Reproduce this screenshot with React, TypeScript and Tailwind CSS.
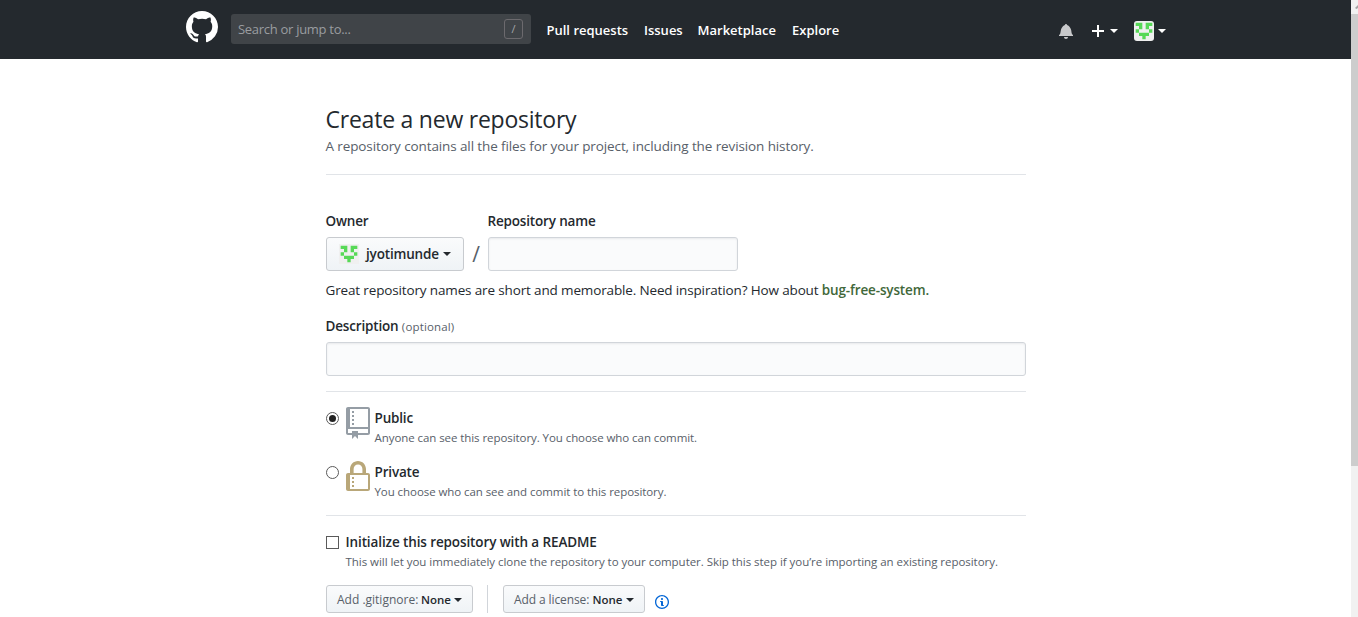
import React from "react";

type IconProps = { d: string; box: string; className: string };
const Icon = ({ d, box, className }: IconProps) => (
  <svg viewBox={box} className={"shrink-0 fill-current " + className} aria-hidden="true">
    <path fillRule="evenodd" d={d} />
  </svg>
);

const MARK =
  "M8 0C3.58 0 0 3.58 0 8c0 3.54 2.29 6.53 5.47 7.59.4.07.55-.17.55-.38 0-.19-.01-.82-.01-1.49-2.01.37-2.53-.49-2.69-.94-.09-.23-.48-.94-.82-1.13-.28-.15-.68-.52-.01-.53.63-.01 1.08.58 1.23.82.72 1.21 1.87.87 2.33.66.07-.52.28-.87.51-1.07-1.78-.2-3.64-.89-3.64-3.95 0-.87.31-1.59.82-2.15-.08-.2-.36-1.02.08-2.12 0 0 .67-.21 2.2.82.64-.18 1.32-.27 2-.27.68 0 1.36.09 2 .27 1.53-1.04 2.2-.82 2.2-.82.44 1.1.16 1.92.08 2.12.51.56.82 1.27.82 2.15 0 3.07-1.87 3.75-3.65 3.95.29.25.54.73.54 1.48 0 1.07-.01 1.93-.01 2.2 0 .21.15.46.55.38A8.013 8.013 0 0 0 16 8c0-4.42-3.58-8-8-8z";
const REPO =
  "M4 9H3V8h1v1zm0-3H3v1h1V6zm0-2H3v1h1V4zm0-2H3v1h1V2zm8-1v12c0 .55-.45 1-1 1H6v2l-1.5-1.5L3 16v-2H1c-.55 0-1-.45-1-1V1c0-.55.45-1 1-1h10c.55 0 1 .45 1 1zm-1 10H1v2h2v-1h3v1h5v-2zm0-10H2v9h9V1z";
const LOCK =
  "M4 13H3v-1h1v1zm8-6v7c0 .55-.45 1-1 1H1c-.55 0-1-.45-1-1V7c0-.55.45-1 1-1h1V4c0-2.2 1.8-4 4-4s4 1.8 4 4v2h1c.55 0 1 .45 1 1zM3.8 6h4.41V4c0-1.22-.98-2.2-2.2-2.2-1.22 0-2.2.98-2.2 2.2v2H3.8zM11 7H2v7h9V7zM4 8H3v1h1V8zm0 2H3v1h1v-1z";
const BELL =
  "M14 12v1H0v-1l.73-.58c.77-.77.81-2.55 1.19-4.42C2.69 3.23 6 2 6 2c0-.55.45-1 1-1s1 .45 1 1c0 0 3.39 1.23 4.16 5 .38 1.88.42 3.66 1.19 4.42l.66.58H14zm-7 4c1.11 0 2-.89 2-2H5c0 1.11.89 2 2 2z";
const PLUS = "M12 9H7v5H5V9H0V7h5V2h2v5h5z";
const INFO =
  "M6.3 5.69a.942.942 0 0 1-.28-.7c0-.28.09-.52.28-.7.19-.18.42-.28.7-.28.28 0 .52.09.7.28.18.19.28.42.28.7 0 .28-.09.52-.28.7a1 1 0 0 1-.7.3c-.28 0-.52-.11-.7-.3zM8 7.99c-.02-.25-.11-.48-.31-.69-.2-.19-.42-.3-.69-.31H6c-.27.02-.48.13-.69.31-.2.2-.3.44-.31.69h1v3c.02.27.11.5.31.69.2.2.42.31.69.31h1c.27 0 .48-.11.69-.31.2-.19.3-.42.31-.69H8V7.98v.01zM7 2.3c-3.14 0-5.7 2.54-5.7 5.68 0 3.14 2.56 5.7 5.7 5.7s5.7-2.55 5.7-5.7c0-3.15-2.56-5.69-5.7-5.69v.01zM7 .98c3.86 0 7 3.14 7 7s-3.14 7-7 7-7-3.12-7-7 3.14-7 7-7z";

const Identicon = ({ className }: { className: string }) => (
  <svg viewBox="0 0 12 12" className={"shrink-0 " + className} aria-hidden="true">
    <rect width="12" height="12" fill="#f0f0f0" />
    <path fill="#57d957" d="M1 1h4v4H3V3H1zM7 1h4v2H9v2H7zM1 5h2v2H1zM9 5h2v2H9zM3 7h6v2H7v2H5V9H3z" />
  </svg>
);

const Caret = ({ className }: { className: string }) => (
  <span className={"h-0 w-0 shrink-0 border-x-4 border-t-4 border-x-transparent " + className} />
);

const field =
  "block h-[34px] rounded-[3px] border border-[#d1d5da] bg-[#fafbfc] shadow-[inset_0_1px_2px_rgba(27,31,35,0.075)] outline-none";
const button =
  "flex items-center rounded-[3px] border border-[#c8cbcf] bg-linear-to-b from-[#fafbfc] to-[#eff3f6]";
const label = "font-semibold tracking-[-0.17px] -ml-[0.5px]";
const note = "-ml-[0.5px] h-5 text-[11.5px] leading-5 text-[#586069]";

export default function App() {
  return (
    <div className="flex h-[617px] w-[1358px] overflow-hidden bg-white font-['Open_Sans','Noto_Sans',sans-serif] text-[13.5px] text-[#24292e]">
      <div className="w-[1351px]">
        <header className="flex h-[59px] items-center bg-[#24292e] pl-[186px] text-white">
          <Icon d={MARK} box="0 0 16 16" className="mb-[5px] h-8 w-8" />
          <div className="mb-px ml-[13px] flex h-[30px] w-[300px] items-center justify-between rounded-[3px] bg-[#404448] pr-2 pl-[7px]">
            <span className="pt-px text-[13px] tracking-[-0.29px] text-[#9a9da0]">Search or jump to...</span>
            <span className="flex h-5 w-[19px] items-center justify-center rounded-[3px] border border-[#6c6a6e] text-[11px] text-[#a3a6a8]">/</span>
          </div>
          <nav className="ml-[15.5px] flex gap-4 pt-[2px] text-[13px] font-semibold whitespace-nowrap">
            <a className="w-[81.5px]">Pull requests</a>
            <a className="w-[37.5px]">Issues</a>
            <a className="w-[78.5px]">Marketplace</a>
            <a className="w-[48px]">Explore</a>
          </nav>
          <div className="ml-[219px] flex items-center pt-[3px]">
            <Icon d={BELL} box="0 0 14 16" className="h-4 w-[14px] text-[#c8c9cb]" />
            <Icon d={PLUS} box="0 0 12 16" className="ml-[19px] h-4 w-3" />
            <Caret className="ml-[6px] border-t-white" />
            <Identicon className="ml-4 h-5 w-5 rounded-[3px]" />
            <Caret className="ml-1 border-t-white" />
          </div>
        </header>

        <main className="ml-[326px] w-[700px] whitespace-nowrap">
          <div className="h-[116px] border-b border-[#e1e4e8] pt-[42px]">
            <h1 className="-ml-[0.5px] h-[35px] text-[23px] leading-9 font-normal tracking-[-0.23px]">Create a new repository</h1>
            <p className="-ml-[0.5px] h-5 leading-5 tracking-[-0.11px] text-[#586069]">
              A repository contains all the files for your project, including the revision history.
            </p>
          </div>

          <div className="flex pt-[36px]">
            <div className="w-[138px]">
              <div className={label + " h-[26px] leading-5"}>Owner</div>
              <div className={button + " h-[34px] pl-[12px]"}>
                <Identicon className="h-5 w-5" />
                <span className="ml-[7px] w-[74px] font-semibold tracking-[-0.17px]">jyotimunde</span>
                <Caret className="ml-[3px] border-t-[#24292e]" />
              </div>
            </div>
            <div className="flex w-6 items-end justify-center pb-px text-[21px] text-[#586069]">/</div>
            <div className="w-[250px]">
              <div className={label + " h-[26px] leading-5"}>Repository name</div>
              <input className={field + " w-full"} />
            </div>
          </div>

          <p className="mt-[9px] -ml-[0.5px] h-5 leading-5 tracking-[-0.145px]">
            Great repository names are short and memorable. Need inspiration? How about{" "}
            <b className="font-semibold text-[#41683a]">bug-free-system.</b>
          </p>

          <div className={label + " mt-4 h-[26px] leading-5"}>
            Description <span className="text-[11.5px] font-normal tracking-[0.15px] text-[#586069]">(optional)</span>
          </div>
          <input className={field + " w-full"} />

          <div className="mt-[15px] border-y border-[#e1e4e8] pt-[15px]">
            <div className="flex h-[54px]">
              <span className="mt-[5px] flex h-[13px] w-[13px] items-center justify-center rounded-full border border-[#5a5a5a]">
                <span className="h-[7px] w-[7px] rounded-full bg-[#222]" />
              </span>
              <Icon d={REPO} box="0 0 12 16" className="ml-[7px] h-8 w-6 text-[#959da5]" />
              <div className="ml-[5px] pt-px">
                <div className={label + " h-5 leading-5"}>Public</div>
                <p className={note + " tracking-[-0.07px]"}>
                  Anyone can see this repository. You choose who can commit.
                </p>
              </div>
            </div>
            <div className="flex h-[54px]">
              <span className="mt-[5px] h-[13px] w-[13px] rounded-full border border-[#5a5a5a]" />
              <Icon d={LOCK} box="0 0 12 16" className="ml-[7px] h-8 w-6 text-[#b9a779]" />
              <div className="ml-[5px] pt-px">
                <div className={label + " h-5 leading-5"}>Private</div>
                <p className={note + " tracking-[-0.07px]"}>
                  You choose who can see and commit to this repository.
                </p>
              </div>
            </div>
          </div>

          <div className="flex pt-4">
            <span className="mt-1 h-[13px] w-[13px] border border-[#5a5a5a]" />
            <div className="ml-[7px]">
              <div className="-ml-[0.5px] h-5 leading-5 font-semibold tracking-[-0.11px]">Initialize this repository with a README</div>
              <p className={note + " tracking-[-0.04px]"}>
                This will let you immediately clone the repository to your computer. Skip this step if you’re importing an existing repository.
              </p>
            </div>
          </div>

          <div className="mt-[13px] flex text-[11.5px]">
            <div className={button + " h-7 w-[147px] pt-px pl-[10px]"}>
              <span className="w-[82px] text-[12px] text-[#586069]">Add .gitignore:</span>
              <span className="ml-[2px] w-[30px] font-semibold">None</span>
              <Caret className="ml-[3px] border-t-[#24292e]" />
            </div>
            <div className="ml-[14px] h-7 w-px bg-[#d1d5da]" />
            <div className={button + " ml-[15px] h-7 w-[142px] pt-px pl-[10px]"}>
              <span className="w-[76px] text-[12px] tracking-[-0.1px] text-[#586069]">Add a license:</span>
              <span className="ml-[2.5px] w-[30px] font-semibold">None</span>
              <Caret className="ml-[3px] border-t-[#24292e]" />
            </div>
            <Icon d={INFO} box="0 0 14 16" className="mt-[9px] ml-[10px] h-4 w-[14px] text-[#0366d6]" />
          </div>
        </main>
      </div>
      <div className="flex w-[7px] flex-col bg-[#f1f1f1]">
        <svg viewBox="0 0 7 14" className="h-[14px] w-[7px]">
          <path d="M4 8l3-3v3L5.5 9z" fill="#a3a3a3" />
        </svg>
        <div className="h-[452px] bg-[#cdcdcd]" />
      </div>
    </div>
  );
}
